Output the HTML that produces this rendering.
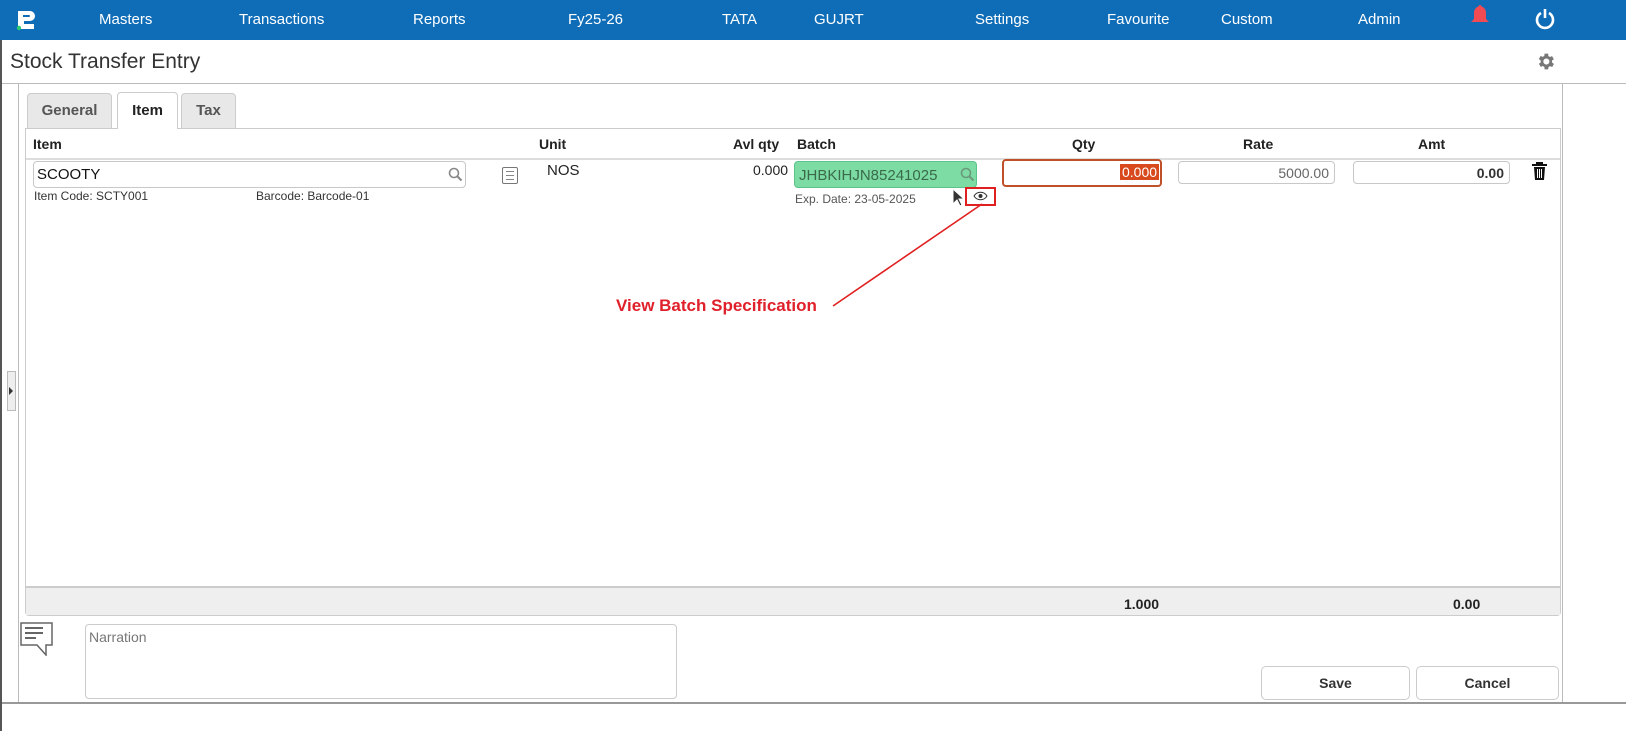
<!DOCTYPE html>
<html><head><meta charset="utf-8"><style>
*{box-sizing:border-box;margin:0;padding:0}
body{width:1626px;height:731px;overflow:hidden;background:#fff;font-family:"Liberation Sans",sans-serif;position:relative;color:#222}
.a{position:absolute}
.nav{left:0;top:0;width:1626px;height:40px;background:#0f6db8}
.nav span{position:absolute;top:11px;color:#fff;font-size:15px}
.inp{position:absolute;border:1px solid #c8c8c8;border-radius:4px;background:#fff;font-size:14px}
.th{position:absolute;top:136px;font-weight:bold;font-size:14px}
.btn{position:absolute;border:1px solid #ccc;border-radius:5px;background:#fff;font-weight:bold;font-size:14px;text-align:center;line-height:32px;color:#333}
</style></head><body>
<div class="a nav">
<svg class="a" style="left:14px;top:9px" width="24" height="22" viewBox="0 0 24 22"><path d="M4 2h12a5 5 0 0 1 0 10h-6v3h10v5H4z M9 6v2h6a1 1 0 0 0 0-2z" fill="#fff" fill-rule="evenodd"/><circle cx="5" cy="19" r="2.2" fill="#2ecc71"/></svg>
<span style="left:99px">Masters</span><span style="left:239px">Transactions</span><span style="left:413px">Reports</span><span style="left:568px">Fy25-26</span><span style="left:722px">TATA</span><span style="left:814px">GUJRT</span><span style="left:975px">Settings</span><span style="left:1107px">Favourite</span><span style="left:1221px">Custom</span><span style="left:1358px">Admin</span>
<svg class="a" style="left:1468px;top:3px" width="24" height="24" viewBox="0 0 24 24"><path d="M12 2c-1 0-1.5.8-1.5 1.5C7 4.5 6 7.5 6 10v6l-3 3h18l-3-3v-6c0-2.5-1-5.5-4.5-6.5C13.5 2.8 13 2 12 2z" fill="#f04a52"/></svg>
<svg class="a" style="left:1535px;top:8px" width="20" height="22" viewBox="0 0 20 22"><path d="M6 5a8 8 0 1 0 8 0" stroke="#fff" stroke-width="2.6" fill="none"/><path d="M10 1v9" stroke="#fff" stroke-width="2.6"/></svg>
</div>
<div class="a" style="left:0;top:40px;width:2px;height:691px;background:#555"></div>
<div class="a" style="left:10px;top:50px;font-size:21px;color:#333">Stock Transfer Entry</div>
<svg class="a" style="left:1535px;top:51px" width="21" height="21" viewBox="0 0 24 24"><path fill="#777" d="M19.4 13a7.5 7.5 0 0 0 0-2l2.1-1.6-2-3.5-2.5 1a7 7 0 0 0-1.7-1L15 3h-4l-.4 2.7a7 7 0 0 0-1.7 1l-2.5-1-2 3.5L6.6 11a7.5 7.5 0 0 0 0 2l-2.1 1.6 2 3.5 2.5-1a7 7 0 0 0 1.7 1L11 21h4l.4-2.7a7 7 0 0 0 1.7-1l2.5 1 2-3.5zM13 15.5a3.5 3.5 0 1 1 0-7 3.5 3.5 0 0 1 0 7z"/></svg>
<div class="a" style="left:2px;top:83px;width:1624px;height:1px;background:#bbb"></div>
<div class="a" style="left:18px;top:83px;width:1px;height:620px;background:#bbb"></div>
<div class="a" style="left:1562px;top:83px;width:1px;height:620px;background:#bbb"></div>
<div class="a" style="left:2px;top:702px;width:1624px;height:2px;background:#999"></div>
<div class="a" style="left:7px;top:371px;width:9px;height:40px;background:#eee;border:1px solid #bbb"></div>
<div class="a" style="left:9px;top:387px;width:0;height:0;border-left:4px solid #333;border-top:4px solid transparent;border-bottom:4px solid transparent"></div>
<div class="a" style="left:27px;top:93px;width:85px;height:36px;background:#e8e8e8;border:1px solid #ccc;border-radius:4px 4px 0 0;font-weight:bold;font-size:15px;color:#555;text-align:center;line-height:34px">General</div>
<div class="a" style="left:117px;top:92px;width:61px;height:37px;background:#fff;border:1px solid #ccc;border-bottom:none;border-radius:4px 4px 0 0;font-weight:bold;font-size:15px;text-align:center;line-height:36px;z-index:2">Item</div>
<div class="a" style="left:181px;top:93px;width:55px;height:36px;background:#e8e8e8;border:1px solid #ccc;border-radius:4px 4px 0 0;font-weight:bold;font-size:15px;color:#555;text-align:center;line-height:34px">Tax</div>
<div class="a" style="left:25px;top:128px;width:1536px;height:488px;border:1px solid #ccc;border-radius:0 0 4px 4px"></div>
<div class="a" style="left:26px;top:158px;width:1534px;height:2px;background:#ddd"></div>
<div class="a" style="left:26px;top:586px;width:1534px;height:29px;background:#efefef;border-top:2px solid #ccc"></div>
<div class="th" style="left:33px">Item</div><div class="th" style="left:539px">Unit</div><div class="th" style="left:733px">Avl qty</div><div class="th" style="left:797px">Batch</div><div class="th" style="left:1072px">Qty</div><div class="th" style="left:1243px">Rate</div><div class="th" style="left:1418px">Amt</div>
<div class="inp" style="left:33px;top:161px;width:433px;height:27px;padding:4px 3px;font-size:15px;color:#111">SCOOTY</div>
<svg class="a" style="left:448px;top:167px" width="15" height="15" viewBox="0 0 15 15"><circle cx="6" cy="6" r="4.5" stroke="#888" stroke-width="1.6" fill="none"/><path d="M9.5 9.5l4 4" stroke="#888" stroke-width="2"/></svg>
<div class="a" style="left:34px;top:189px;font-size:12px;color:#333">Item Code: SCTY001</div>
<div class="a" style="left:256px;top:189px;font-size:12px;color:#333">Barcode: Barcode-01</div>
<div class="a" style="left:502px;top:167px;width:16px;height:17px;border:1.5px solid #777;border-radius:2px;background:repeating-linear-gradient(#fff 0 3px,#888 3px 4px);background-clip:content-box;padding:2px 3px"></div>
<div class="a" style="left:547px;top:162px;font-size:15px">NOS</div>
<div class="a" style="left:753px;top:162px;font-size:14px">0.000</div>
<div class="a" style="left:794px;top:161px;width:183px;height:27px;background:#7cdca4;border:1px solid #5cc48a;border-radius:4px;font-size:15px;color:#3a6a4a;padding:5px 4px">JHBKIHJN85241025</div>
<svg class="a" style="left:960px;top:167px" width="15" height="15" viewBox="0 0 15 15"><circle cx="6" cy="6" r="4.5" stroke="#6a9a7a" stroke-width="1.6" fill="none"/><path d="M9.5 9.5l4 4" stroke="#6a9a7a" stroke-width="2"/></svg>
<div class="a" style="left:795px;top:192px;font-size:12px;color:#555">Exp. Date: 23-05-2025</div>
<svg class="a" style="left:952px;top:188px" width="14" height="20" viewBox="0 0 14 20"><path d="M1 1v15l4-4 3 6 2-1-3-6h5z" fill="#333" stroke="#fff"/></svg>
<div class="a" style="left:965px;top:187px;width:31px;height:19px;border:2px solid #e02020"></div>
<svg class="a" style="left:973px;top:191px" width="15" height="10" viewBox="0 0 15 10"><path d="M1 5c3-5 10-5 13 0-3 5-10 5-13 0z" stroke="#333" fill="none"/><circle cx="7.5" cy="5" r="2" fill="#333"/></svg>
<svg class="a" style="left:830px;top:200px" width="160" height="110"><path d="M152 4L3 106" stroke="#e02020" stroke-width="1.6"/></svg>
<div class="a" style="left:616px;top:296px;font-weight:bold;font-size:17px;color:#e0202a">View Batch Specification</div>
<div class="a" style="left:1002px;top:159px;width:160px;height:28px;border:2px solid #c0502a;border-radius:4px;background:#fff"></div>
<div class="a" style="left:1120px;top:164px;background:#d84a1e;color:#fff;font-size:14px;padding:0 2px">0.000</div>
<div class="inp" style="left:1178px;top:161px;width:157px;height:23px;text-align:right;padding:3px 5px;color:#666">5000.00</div>
<div class="inp" style="left:1353px;top:161px;width:157px;height:23px;text-align:right;padding:3px 5px;font-weight:bold;color:#333">0.00</div>
<svg class="a" style="left:1531px;top:162px" width="17" height="19" viewBox="0 0 17 19"><path d="M1 3h15M6 3V1h5v2" stroke="#111" stroke-width="2" fill="none"/><path d="M3 5h11l-1 13H4z" fill="#111"/><path d="M6.5 7v9M8.5 7v9M10.5 7v9" stroke="#fff" stroke-width="1"/></svg>
<div class="a" style="left:1124px;top:596px;font-weight:bold;font-size:14px">1.000</div>
<div class="a" style="left:1453px;top:596px;font-weight:bold;font-size:14px">0.00</div>
<svg class="a" style="left:20px;top:622px" width="34" height="34" viewBox="0 0 34 34"><path d="M1 1h31v22H26v10L17 23H1z" stroke="#666" stroke-width="1.5" fill="none"/><path d="M5 6h18M5 11h18M5 16h11" stroke="#666" stroke-width="2"/></svg>
<div class="inp" style="left:85px;top:624px;width:592px;height:75px;padding:4px 3px;color:#777;font-size:14px;border-color:#ccc">Narration</div>
<div class="btn" style="left:1261px;top:666px;width:149px;height:34px">Save</div>
<div class="btn" style="left:1416px;top:666px;width:143px;height:34px">Cancel</div>
</body></html>
